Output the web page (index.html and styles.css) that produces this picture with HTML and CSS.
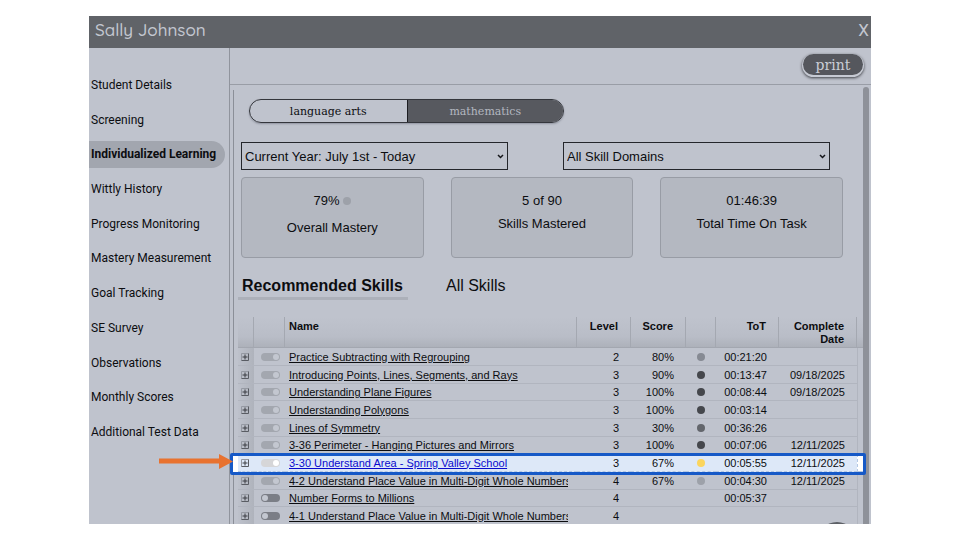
FILE: index.html
```html
<!DOCTYPE html>
<html lang="en">
<head>
    <meta charset="UTF-8">
    <meta name="viewport" content="width=device-width, initial-scale=1.0">
    <title>Sally Johnson</title>
    <link rel="stylesheet" href="styles.css">
</head>
<body>
    <div class="window">
        <header class="titlebar">
            <h1>Sally Johnson</h1>
            <button class="close" type="button">X</button>
        </header>
        <div class="body">
            <nav class="sidebar">
                <ul class="menu">
                    <li><a href="#">Student Details</a></li>
                    <li><a href="#">Screening</a></li>
                    <li><a href="#" class="active">Individualized Learning</a></li>
                    <li><a href="#">Wittly History</a></li>
                    <li><a href="#">Progress Monitoring</a></li>
                    <li><a href="#">Mastery Measurement</a></li>
                    <li><a href="#">Goal Tracking</a></li>
                    <li><a href="#">SE Survey</a></li>
                    <li><a href="#">Observations</a></li>
                    <li><a href="#">Monthly Scores</a></li>
                    <li><a href="#">Additional Test Data</a></li>
                </ul>
            </nav>
            <main class="main">
                <div class="toolbar">
                    <button class="print" type="button">print</button>
                </div>
                <div class="panel">
                    <div class="content">
                        <div class="subjects">
                            <button type="button">language arts</button>
                            <button type="button" class="selected">mathematics</button>
                        </div>
                        <div class="filters">
                            <div class="filter">
                                <select aria-label="Date range">
                                    <option>Current Year: July 1st - Today</option>
                                </select>
                                <svg width="7" height="5" viewBox="0 0 7 5"><path d="M1 1L3.5 3.5L6 1" fill="none" stroke="#15161a" stroke-width="1.5"/></svg>
                            </div>
                            <div class="filter">
                                <select aria-label="Skill domain">
                                    <option>All Skill Domains</option>
                                </select>
                                <svg width="7" height="5" viewBox="0 0 7 5"><path d="M1 1L3.5 3.5L6 1" fill="none" stroke="#15161a" stroke-width="1.5"/></svg>
                            </div>
                        </div>
                        <div class="stats">
                            <div class="stat">
                                <div class="stat-value with-dot">79% <span class="dot faint"></span></div>
                                <div>Overall Mastery</div>
                            </div>
                            <div class="stat">
                                <div class="stat-value">5 of 90</div>
                                <div>Skills Mastered</div>
                            </div>
                            <div class="stat">
                                <div class="stat-value">01:46:39</div>
                                <div>Total Time On Task</div>
                            </div>
                        </div>
                        <div class="tabs">
                            <button type="button" class="current">Recommended Skills</button>
                            <button type="button">All Skills</button>
                        </div>
                        <table class="skills">
                            <colgroup>
                                <col class="c-expand"><col class="c-toggle"><col><col class="c-level"><col class="c-score"><col class="c-dot"><col class="c-tot"><col class="c-date"><col class="c-end">
                            </colgroup>
                            <thead>
                                <tr>
                                    <th></th>
                                    <th></th>
                                    <th class="name">Name</th>
                                    <th>Level</th>
                                    <th>Score</th>
                                    <th></th>
                                    <th>ToT</th>
                                    <th>Complete Date</th>
                                    <th></th>
                                </tr>
                            </thead>
                            <tbody id="rows"></tbody>
                        </table>
                    </div>
                    <div class="scrollbar"></div>
                </div>
            </main>
        </div>
        <div class="bubble"></div>
    </div>

    <script>
        const skills = [
            ['Practice Subtracting with Regrouping', 2, '80%', 'light', '00:21:20', '', true],
            ['Introducing Points, Lines, Segments, and Rays', 3, '90%', 'dark', '00:13:47', '09/18/2025', true],
            ['Understanding Plane Figures', 3, '100%', 'dark', '00:08:44', '09/18/2025', true],
            ['Understanding Polygons', 3, '100%', 'dark', '00:03:14', '', true],
            ['Lines of Symmetry', 3, '30%', 'mid', '00:36:26', '', true],
            ['3-36 Perimeter - Hanging Pictures and Mirrors', 3, '100%', 'dark', '00:07:06', '12/11/2025', true],
            ['3-30 Understand Area - Spring Valley School', 3, '67%', 'yellow', '00:05:55', '12/11/2025', true],
            ['4-2 Understand Place Value in Multi-Digit Whole Numbers', 4, '67%', 'faint', '00:04:30', '12/11/2025', true],
            ['Number Forms to Millions', 4, '', '', '00:05:37', '', false],
            ['4-1 Understand Place Value in Multi-Digit Whole Numbers', 4, '', '', '', '', false]
        ];
        const highlighted = 6;

        const callout = `
            <div class="callout">
                <svg class="arrow" width="76" height="16" viewBox="0 0 76 16">
                    <path d="M2 4.5H62V0L76 7.5L62 15V9.5H2Z" fill="#e8722f"/>
                </svg>
            </div>`;

        document.getElementById('rows').innerHTML = skills.map((s, i) => `
            <tr class="${i === highlighted ? 'highlight' : ''}">
                <td>${i === highlighted ? callout : ''}<button class="expand" type="button" aria-label="Expand ${s[0]}">
                    <svg width="8" height="8" viewBox="0 0 8 8"><path d="M.5 7.5V.5H7.5" fill="none" stroke="#9599a2"/><path d="M.5 7.5H7.5V.5" fill="none" stroke="#595c63"/><path d="M1.5 4H6.5M4 1.5V6.5" stroke="#3a3c42"/></svg>
                </button></td>
                <td><input class="toggle" type="checkbox" aria-label="Assign ${s[0]}" ${s[6] ? 'checked' : ''}></td>
                <td class="name"><div><a href="#">${s[0]}</a></div></td>
                <td>${s[1]}</td>
                <td>${s[2]}</td>
                <td class="status">${s[3] ? `<span class="dot ${s[3]}"></span>` : ''}</td>
                <td>${s[4]}</td>
                <td>${s[5]}</td>
                <td></td>
            </tr>`).join('');
    </script>
</body>
</html>
```
FILE: styles.css
```css
* {
    box-sizing: border-box;
}

body {
    margin: 0;
    padding: 16px 89px;
    height: 100vh;
    background: white;
    font-family: "Liberation Sans", Arial, sans-serif;
    font-size: 13px;
    color: #0c0d10;
}

button {
    font: inherit;
    color: inherit;
    background: none;
    border: none;
    padding: 0;
    cursor: pointer;
}

.window {
    height: 100%;
    display: flex;
    flex-direction: column;
    position: relative;
    overflow: hidden;
    background: #bfc3cd;
}

.titlebar {
    display: flex;
    justify-content: space-between;
    align-items: center;
    flex: none;
    height: 32px;
    padding: 0 2px 5px 6px;
    background: #606368;
    color: #c3c7d0;
}

.titlebar h1 {
    margin: 0;
    font-family: Quicksand, Lato, sans-serif;
    font-size: 17px;
    font-weight: 500;
}

.close {
    font-family: Roboto, sans-serif;
    font-size: 17px;
}

.body {
    display: flex;
    flex: 1;
    min-height: 0;
}

.sidebar {
    flex: none;
    width: 141px;
    padding: 20px 0 74px;
    border-right: 1px solid #90949d;
    font-family: Roboto, sans-serif;
    font-size: 12px;
}

.menu {
    display: grid;
    grid-auto-rows: 1fr;
    align-items: center;
    height: 100%;
    margin: 0;
    padding: 0;
    list-style: none;
}

.menu a {
    display: block;
    margin-right: 4px;
    padding-left: 2px;
    line-height: 27px;
    color: inherit;
    text-decoration: none;
    white-space: nowrap;
}

.menu .active {
    background: #a2a6af;
    border-radius: 0 14px 14px 0;
    font-weight: bold;
}

.main {
    display: flex;
    flex-direction: column;
    flex: 1;
    min-width: 0;
}

.toolbar {
    display: flex;
    justify-content: flex-end;
    flex: none;
    height: 37px;
    padding: 6px 8px 0 0;
    border-bottom: 1px solid #999da6;
}

.print {
    width: 60px;
    height: 21px;
    border-radius: 11px;
    background: #55575d;
    color: #c9cdd6;
    font-family: "DejaVu Serif", serif;
    font-size: 14px;
    line-height: 20px;
    box-shadow: 0 1px 0 1px #c6cad3, 0 2px 3px 1px #3d3f45;
}

.panel {
    display: flex;
    flex: 1;
    min-height: 0;
    padding: 2px 2px 0 3px;
}

.content {
    flex: 1;
    min-width: 0;
    margin-top: 3px;
    padding: 9px 0 0 4px;
    border-left: 1px solid #8b8f98;
}

.scrollbar {
    flex: none;
    width: 6px;
    border-radius: 3px 3px 0 0;
    background: #8e9199;
}

.subjects {
    display: grid;
    grid-template-columns: 1fr 1fr;
    width: 315px;
    height: 24px;
    margin-left: 11px;
    border: 1px solid #34363c;
    border-radius: 12px;
    overflow: hidden;
    font-family: "DejaVu Serif", serif;
    font-size: 11px;
    box-shadow: 0 1px 2px #9094a0;
}

.subjects .selected {
    border-left: 1px solid #1b1c20;
    background: #57595f;
    color: #b3b7c0;
}

.filters {
    display: grid;
    grid-template-columns: 1fr 1fr;
    gap: 55px;
    margin: 19px 33px 0 3px;
}

.filter {
    position: relative;
}

.filter select {
    display: block;
    appearance: none;
    width: 100%;
    height: 28px;
    padding: 0 20px 0 3px;
    border: 1px solid #24262b;
    border-radius: 0;
    background: #bfc3cd;
    color: inherit;
    font: inherit;
}

.filter svg {
    position: absolute;
    top: 12px;
    right: 4px;
    pointer-events: none;
}

.stats {
    display: grid;
    grid-template-columns: 1fr 1fr 1fr;
    gap: 27px;
    margin: 7px 20px 0 3px;
}

.stat {
    height: 81px;
    padding-top: 15px;
    border: 1px solid #989ca5;
    border-radius: 4px;
    background: #b4b8c1;
    text-align: center;
    line-height: 16px;
}

.stat-value {
    margin-bottom: 7px;
}

.stat-value.with-dot {
    margin-bottom: 11px;
}

.dot {
    display: inline-block;
    width: 8px;
    height: 8px;
    border-radius: 50%;
}

.dot.light {
    background: #868a93;
}

.dot.mid {
    background: #63666c;
}

.dot.dark {
    background: #45474c;
}

.dot.faint {
    background: #9da1a9;
}

.dot.yellow {
    background: #fbd55e;
}

.tabs {
    display: flex;
    gap: 34px;
    margin-top: 16px;
    font-size: 16px;
}

.tabs button {
    height: 26px;
    padding: 0 5px 0 4px;
    border-bottom: 3px solid transparent;
}

.tabs .current {
    border-bottom-color: #acb0b9;
    font-weight: bold;
}

.skills {
    width: 100%;
    margin-top: 17px;
    table-layout: fixed;
    border-collapse: separate;
    border-spacing: 0;
    font-size: 11px;
    text-align: right;
}

.c-expand {
    width: 16px;
}

.c-toggle {
    width: 31px;
}

.c-level {
    width: 54px;
}

.c-score {
    width: 55px;
}

.c-dot {
    width: 30px;
}

.c-tot {
    width: 63px;
}

.c-date {
    width: 78px;
}

.c-end {
    width: 6px;
}

.skills th {
    height: 31px;
    padding: 3px 12px 0 0;
    border-right: 1px solid #a4a8b1;
    border-bottom: 1px solid #a3a7b0;
    background: linear-gradient(#bfc3cd, #b9bdc7 65%, #adb1ba);
    line-height: 13px;
    text-align: right;
    vertical-align: top;
}

.skills td {
    height: 18px;
    padding: 0 12px 0 0;
    border-bottom: 1px solid #b1b5bf;
    line-height: 16px;
}

.skills tr:nth-child(3n) td {
    height: 17px;
}

.skills th:last-child {
    padding: 0;
    border-right: none;
}

.skills td:last-child {
    padding: 0;
    border-left: 1px solid #b1b5bf;
    border-bottom: none;
}

.skills td:first-child {
    padding: 0 0 0 3px;
    background: linear-gradient(90deg, #bdc1cb, #afb3bc);
    text-align: left;
}

.skills td:nth-child(2) {
    padding: 0 0 0 7px;
    text-align: left;
}

.skills .name {
    padding: 0 9px 0 4px;
    text-align: left;
}

.skills th.name {
    padding-top: 3px;
}

.name div {
    overflow: hidden;
    height: 16px;
    white-space: nowrap;
}

.name a {
    color: inherit;
    text-underline-offset: 1px;
}

.skills .status {
    padding: 0;
    text-align: center;
}

.expand,
.expand svg,
.toggle {
    display: block;
}

.toggle {
    appearance: none;
    width: 19px;
    height: 8px;
    margin: 0;
    padding: 1px;
    border-radius: 4px;
    background: #7b7e86;
}

.toggle::before {
    content: "";
    display: block;
    width: 6px;
    height: 6px;
    border-radius: 50%;
    background: #c3c7d0;
}

.toggle:checked {
    background: #a3a7af;
}

.toggle:checked::before {
    margin-left: auto;
}

.skills .highlight {
    position: relative;
}

.skills .highlight td {
    background: #dde8f8;
    border-bottom: 1px dashed #b4c8e4;
}

.skills .highlight td:last-child {
    border-left: 1px dashed #b4c8e4;
    background: white;
}

.highlight a {
    color: #0a0acd;
}

.highlight .toggle:checked {
    background: #d6d6d8;
}

.highlight .toggle::before {
    background: white;
}

/* frame around the highlighted row, with the arrow that points at it */
.callout {
    position: absolute;
    top: -1px;
    bottom: -3px;
    left: -8px;
    right: -3px;
    border: 3px solid #1659c7;
    border-radius: 2px;
    box-shadow: inset 5px 0 white;
    pointer-events: none;
}

.arrow {
    position: absolute;
    top: -2px;
    right: 100%;
}

.bubble {
    position: absolute;
    right: 14px;
    bottom: -38px;
    width: 40px;
    height: 40px;
    border-radius: 50%;
    background: #5d6066;
}
```
